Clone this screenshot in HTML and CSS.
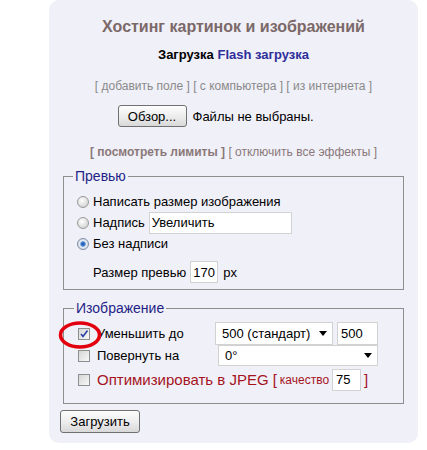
FILE: index.html
```html
<!DOCTYPE html>
<html lang="ru">
<head>
<meta charset="utf-8">
<title>Хостинг картинок и изображений</title>
<link rel="stylesheet" href="styles.css">
</head>
<body>
<div class="panel">
  <h1 class="title">Хостинг картинок и изображений</h1>
  <div class="modes"><b>Загрузка</b> <a class="flash">Flash загрузка</a></div>
  <div class="links">[ добавить поле ] [ с компьютера ] [ из интернета ]</div>
  <div class="file-row">
    <div class="file"><span class="btn btn-browse">Обзор...</span><span class="file-text">Файлы не выбраны.</span></div>
  </div>
  <div class="limits"><b>[ посмотреть лимиты ]</b> [ отключить все эффекты ]</div>
  <form class="form">
    <fieldset class="box box-preview">
      <legend>Превью</legend>
      <div class="row row-first"><span class="radio"></span>Написать размер изображения</div>
      <div class="row"><span class="radio"></span>Надпись<span class="input input-caption">Увеличить</span></div>
      <div class="row"><span class="radio checked"></span>Без надписи</div>
      <div class="row row-size">Размер превью<span class="input input-size">170</span><span class="unit">px</span></div>
    </fieldset>
    <fieldset class="box box-image">
      <legend>Изображение</legend>
      <div class="irow irow-1">
        <div class="lbl"><span class="check checked"><svg class="tick" width="10" height="10" viewBox="0 0 10 10"><path d="M2 5 L4 7.5 L8.5 1.5" fill="none" stroke="#2a3fa8" stroke-width="1.6"/></svg><svg class="ring" width="46" height="32" viewBox="0 0 46 32"><ellipse cx="23" cy="16" rx="19.5" ry="12" fill="none" stroke="#e2000f" stroke-width="3.6"/></svg></span>Уменьшить до</div>
        <div class="sel sel-size"><span>500 (стандарт)</span><svg width="8" height="5" viewBox="0 0 8 5"><path d="M0 0H8L4 5Z" fill="#000"/></svg></div>
        <span class="input input-w">500</span>
      </div>
      <div class="irow irow-2">
        <div class="lbl"><span class="check"></span>Повернуть на</div>
        <div class="sel sel-rot"><span>0°</span><svg width="8" height="5" viewBox="0 0 8 5"><path d="M0 0H8L4 5Z" fill="#000"/></svg></div>
      </div>
      <div class="irow irow-3">
        <div class="lbl lbl-opt"><span class="check"></span>Оптимизировать в JPEG<span class="br br-open">[</span></div>
        <span class="quality">качество</span><span class="input input-q">75</span><span class="br br-close">]</span>
      </div>
    </fieldset>
    <span class="btn btn-upload">Загрузить</span>
  </form>
</div>
</body>
</html>
```
FILE: styles.css
```css
html, body {
  margin: 0;
  padding: 0;
  background: #ffffff;
}
body {
  font-family: "Liberation Sans", Arial, sans-serif;
  font-size: 13px;
  color: #000;
}
.panel {
  margin-left: 49px;
  width: 369px;
  height: 443px;
  background: #f0f0f8;
  border-radius: 10px;
  box-sizing: border-box;
}
.title {
  margin: 0;
  padding-top: 17px;
  font-size: 16px;
  line-height: 20px;
  font-weight: bold;
  color: #7b6868;
  text-align: center;
}
.modes {
  margin-top: 10px;
  font-size: 13px;
  line-height: 16px;
  font-weight: bold;
  text-align: center;
}
.flash {
  color: #2e2e9a;
}
.links {
  margin-top: 15px;
  font-size: 12px;
  line-height: 16px;
  color: #8a8a8a;
  text-align: center;
}
.file-row {
  margin-top: 11px;
  display: flex;
  justify-content: center;
}
.file {
  width: 230px;
  display: flex;
  align-items: center;
  margin-left: -2px;
}
.btn {
  display: inline-flex;
  align-items: center;
  justify-content: center;
  box-sizing: border-box;
  border: 1px solid #707070;
  border-radius: 3px;
  background: linear-gradient(#fdfdfd, #ececec 55%, #d8d8d8);
  font-size: 13px;
  color: #000;
}
.btn-browse {
  width: 69px;
  height: 22px;
}
.file-text {
  margin-left: 6px;
  font-size: 13px;
}
.limits {
  margin-top: 17px;
  font-size: 12px;
  line-height: 16px;
  color: #8a7878;
  text-align: center;
}
.form {
  margin-top: 8px;
  padding: 0 11px;
}
.box {
  margin: 0 3px;
  border: 1px solid #8e8e8e;
  padding: 0 12px 6px 13px;
}
.box legend {
  padding: 0 2px;
  margin-left: -4px;
  font-size: 14px;
  line-height: 16px;
  color: #1f1f86;
}
.row {
  height: 21px;
  display: flex;
  align-items: center;
}
.row-first {
  margin-top: 7px;
}
.row-size {
  margin-top: 7px;
  height: 22px;
  padding-left: 16px;
}
.radio {
  width: 12px;
  height: 12px;
  box-sizing: border-box;
  border-radius: 50%;
  border: 1px solid #9a9a9a;
  background: radial-gradient(circle at 40% 35%, #ffffff, #d4d4d4 75%);
  margin-right: 4px;
  flex: none;
  position: relative;
}
.radio.checked {
  background: radial-gradient(circle, #1b4fa8 0, #4a86d4 2.2px, #e8eef8 3.2px, #d4d4d4 80%);
  border-color: #7d8ea8;
}
.input {
  display: inline-flex;
  align-items: center;
  box-sizing: border-box;
  background: #fff;
  border: 1px solid #d2d2d2;
  padding-left: 2px;
  font-size: 13px;
}
.input-caption {
  width: 143px;
  height: 22px;
  margin-left: 4px;
}
.input-size {
  width: 28px;
  height: 22px;
  margin-left: 4px;
}
.unit {
  margin-left: 5px;
}
.box-image {
  margin-top: 10px;
  padding: 0 12px 12px 14px;
}
.irow {
  display: flex;
  align-items: center;
}
.irow-1 {
  margin-top: 6px;
  height: 23px;
}
.irow-2 {
  height: 21px;
}
.irow-3 {
  margin-top: 2px;
  height: 23px;
}
.lbl {
  width: 136px;
  display: flex;
  align-items: center;
  flex: none;
}
.lbl-opt {
  width: auto;
  color: #a5141e;
  font-size: 15px;
}
.check {
  width: 12px;
  height: 12px;
  box-sizing: border-box;
  border: 1px solid #8f8f8f;
  background: linear-gradient(135deg, #d6d6d6, #f8f8f8);
  margin-right: 7px;
  flex: none;
  position: relative;
  display: flex;
  align-items: center;
  justify-content: center;
}
.check .ring {
  position: absolute;
  left: -22px;
  top: -10px;
}
.sel {
  display: flex;
  align-items: center;
  justify-content: space-between;
  box-sizing: border-box;
  background: #fff;
  border: 1px solid #d2d2d2;
  padding: 0 5px 0 6px;
  font-size: 13px;
}
.sel-size {
  width: 118px;
  height: 23px;
  margin-left: 1px;
}
.sel-rot {
  width: 160px;
  height: 21px;
  margin-left: 4px;
}
.input-w {
  width: 41px;
  height: 23px;
  margin-left: 4px;
  padding-left: 3px;
}
.br {
  color: #a5141e;
  font-size: 15px;
}
.br-open {
  margin-left: 4px;
}
.quality {
  color: #a5141e;
  font-size: 12px;
  margin-left: 3px;
}
.input-q {
  width: 29px;
  height: 22px;
  margin-left: 3px;
  padding-left: 3px;
}
.br-close {
  margin-left: 3px;
}
.btn-upload {
  margin-top: 6px;
  width: 80px;
  height: 23px;
}
```
